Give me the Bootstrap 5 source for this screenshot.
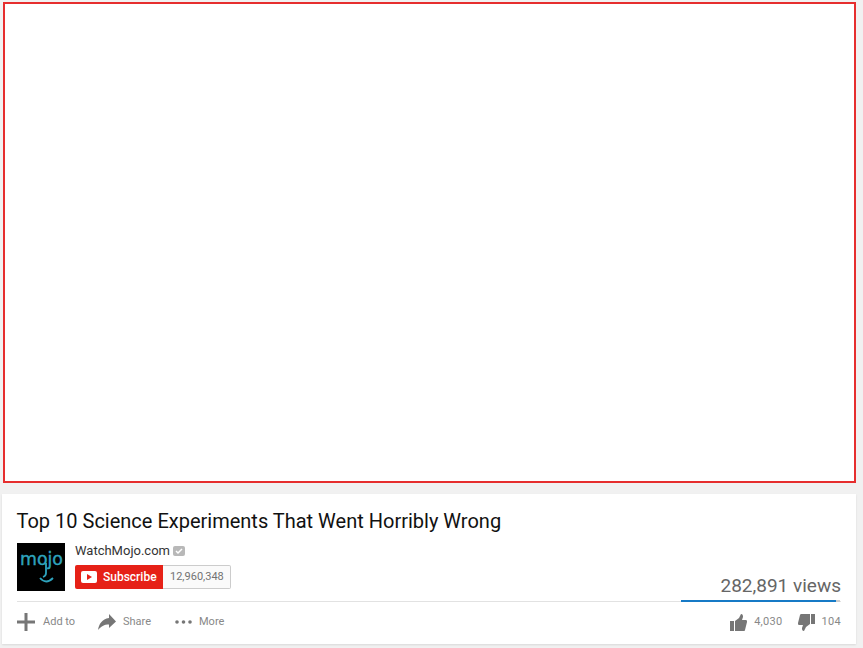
<!DOCTYPE html>
<html lang="en">
<head>
    <meta charset="UTF-8">
    <title>Top 10 Science Experiments That Went Horribly Wrong</title>
    <link href="https://cdn.jsdelivr.net/npm/bootstrap@5.3.3/dist/css/bootstrap.min.css" rel="stylesheet">
    <style>
        body {
            background: #f1f1f1;
            font-family: Roboto, "Liberation Sans", sans-serif;
            height: 648px;
            overflow: hidden;
        }
        .page-wrap { padding: 2px 7px 0 2px; }
        .player-box {
            height: 481px;
            margin-left: 1px;
            background: #fff;
            border: 2px solid #e62e2e;
        }
        .info-card {
            position: relative;
            height: 150px;
            margin-top: 11px;
            padding: 14px 15px 0;
            background: #fff;
            box-shadow: 0 1px 2px rgba(0, 0, 0, .1);
        }
        .video-title {
            margin: 0 0 0 -.5px;
            font-size: 20px;
            font-weight: 400;
            line-height: 26px;
            color: #111;
        }
        .owner-row { height: 48px; margin-top: 9px; gap: 10px; }
        .channel-logo { width: 48px; height: 48px; background: #000; }
        .channel-name { font-size: 13px; line-height: 15px; color: #333; gap: 3px; }
        .verified-mark { width: 12px; height: 10px; background: #b8b8b8; border-radius: 2px; }
        .sub-row { margin-top: 7px; }
        .sub-btn {
            height: 24px;
            width: 88px;
            padding-left: 6px;
            gap: 6px;
            background: #e62117;
            color: #fff;
            font-size: 12px;
            font-weight: 500;
            border-radius: 2px 0 0 2px;
        }
        .sub-count {
            height: 24px;
            padding: 0 6px 0 7px;
            font-size: 11px;
            color: #737373;
            background: #fafafa;
            border: 1px solid #ccc;
            border-left: 0;
            border-radius: 0 2px 2px 0;
        }
        .view-count {
            position: absolute;
            right: 15px;
            top: 80px;
            font-size: 19px;
            line-height: 24px;
            color: #666;
        }
        .action-line { height: 1px; margin-top: 10px; background: #e2e2e2; }
        .like-bar {
            position: absolute;
            right: 16px;
            top: 106px;
            width: 159px;
            height: 2px;
            background: #ccc;
        }
        .like-fill { height: 2px; background: #167ac6; }
        .action-row { height: 40px; font-size: 11px; color: #888; }
        .action-row svg { fill: #767676; display: block; }
        .add-item { width: 81px; gap: 8px; }
        .share-item { width: 77px; gap: 7px; }
        .more-item { gap: 7px; }
        .rating-group { gap: 7px; letter-spacing: .3px; }
        .rating-gap { margin-left: 8px; }
    </style>
</head>
<body>
    <div class="page-wrap">
        <div class="player-box"></div>

        <div class="info-card">
            <h1 class="video-title">Top 10 Science Experiments That Went Horribly Wrong</h1>

            <div class="owner-row d-flex">
                <svg class="channel-logo" viewBox="0 0 48 48">
                    <text x="3" y="22" font-family="'DejaVu Sans', sans-serif" font-size="17" textLength="43" lengthAdjust="spacingAndGlyphs" fill="#2ea3bd" stroke="#2ea3bd" stroke-width=".4">mojo</text>
                    <path d="M29 20v10q0 3-3 4" fill="none" stroke="#2ea3bd" stroke-width="1.800"/>
                    <path d="M23 35q6 7 13 0" fill="none" stroke="#2ea3bd" stroke-width="1.800"/>
                </svg>
                <div>
                    <div class="d-flex align-items-center channel-name">
                        WatchMojo.com
                        <svg class="verified-mark" viewBox="0 0 12 10"><path d="M3 5l2 2 4-4" fill="none" stroke="#fff" stroke-width="1.5"/></svg>
                    </div>
                    <div class="sub-row d-flex">
                        <div class="sub-btn d-flex align-items-center">
                            <svg width="16" height="12" viewBox="0 0 16 12">
                                <rect width="16" height="12" rx="2" fill="#fff"/>
                                <path d="M6 3l5 3-5 3z" fill="#e62117"/>
                            </svg>
                            <span>Subscribe</span>
                        </div>
                        <div class="sub-count d-flex align-items-center">12,960,348</div>
                    </div>
                </div>
            </div>

            <div class="view-count">282,891 views</div>
            <div class="action-line"></div>
            <div class="like-bar"><div class="like-fill" style="width: 97.5%"></div></div>

            <div class="action-row d-flex align-items-center">
                <div class="add-item d-flex align-items-center">
                    <svg width="18" height="18" viewBox="0 0 18 18"><path d="M7.500 0h3v7.500H18v3h-7.500V18h-3v-7.500H0v-3h7.500z"/></svg>
                    <span>Add to</span>
                </div>
                <div class="share-item d-flex align-items-center">
                    <svg width="18" height="16" viewBox="0 0 18 16"><path d="M11 0l7 7.500-7 6.500v-3.500C6 10.500 3 12.500 0 16 1 10 4 5 11 4z"/></svg>
                    <span>Share</span>
                </div>
                <div class="more-item d-flex align-items-center">
                    <svg width="17" height="4" viewBox="0 0 17 4"><circle cx="2" cy="2" r="1.800"/><circle cx="8.500" cy="2" r="1.800"/><circle cx="15" cy="2" r="1.800"/></svg>
                    <span>More</span>
                </div>
                <div class="rating-group ms-auto d-flex align-items-center">
                    <svg width="17" height="17" viewBox="0 0 17 17"><path d="M0 7h4v10H0zM5 7l4-3 2-4c2 0 2 2 2 3l-1 3h4c1 0 1 1 1 2l-2 8c0 1-1 1-2 1H5z"/></svg>
                    <span>4,030</span>
                    <svg class="rating-gap" width="17" height="17" viewBox="0 0 17 17"><path d="M17 10h-4V0h4zM12 10l-4 3-2 4c-2 0-2-2-2-3l1-3H1c-1 0-1-1-1-2l2-8c0-1 1-1 2-1h8z"/></svg>
                    <span>104</span>
                </div>
            </div>
        </div>
    </div>
</body>
</html>
